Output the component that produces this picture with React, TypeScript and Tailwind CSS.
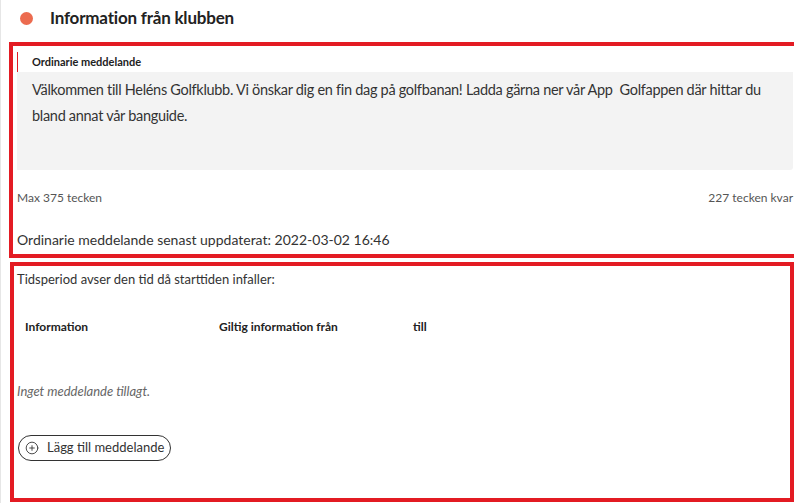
import { CirclePlus } from "lucide-react";

// ── Page ──────────────────────────────────────────────────────────────────────

export default function App() {
  return (
    <div className="h-[503px] w-[794px] overflow-hidden border-l border-[#e6e6e6] bg-white font-['Lato',sans-serif] text-[#333]">
      {/* Header */}
      <div className="flex h-[36px] items-center pl-[19px]">
        <span className="h-[13px] w-[13px] rounded-full bg-[#ec6b4f]" />
        <h1 className="ml-[17px] text-[17px] font-bold tracking-[-0.2px] text-[#222]">
          Information från klubben
        </h1>
      </div>

      {/* Ordinarie meddelande */}
      <section className="ml-[8px] mt-[6px] w-[800px] border-4 border-[#e31b23] pl-[4px] pr-[10px]">
        <div className="mt-[6px] flex h-[20px] items-center border-l border-[#e31b23] pl-[14px] text-[11px] font-bold text-[#222]">
          Ordinarie meddelande
        </div>
        <div className="h-[98px] w-[776px] rounded-br-[3px] bg-[#f3f3f3] px-[15px] pt-[5px] text-[14.5px] leading-[26px] tracking-[-0.3px]">
          Välkommen till Heléns Golfklubb. Vi önskar dig en fin dag på golfbanan! Ladda gärna ner vår App&nbsp; Golfappen där hittar du bland annat vår banguide.
        </div>
        <div className="mt-[19px] flex w-[776px] justify-between text-[12px] text-[#555]">
          <span>Max 375 tecken</span>
          <span>227 tecken kvar</span>
        </div>
        <p className="mt-[22px] pb-[4px] text-[14px]">
          Ordinarie meddelande senast uppdaterat: 2022-03-02 16:46
        </p>
      </section>

      {/* Tidsperiod */}
      <section className="ml-[9px] mt-[4px] h-[240px] w-[784px] border-4 border-[#e31b23] pl-[3px]">
        <p className="mt-[4px] text-[13px]">
          Tidsperiod avser den tid då starttiden infaller:
        </p>
        <div className="mt-[28px] grid grid-cols-[194px_194px_1fr] pl-[8px] text-[12px] font-bold text-[#222]">
          <span>Information</span>
          <span>Giltig information från</span>
          <span>till</span>
        </div>
        <p className="mt-[46px] text-[13px] italic text-[#666]">
          Inget meddelande tillagt.
        </p>
        <button
          type="button"
          className="ml-[1px] mt-[34px] flex h-[26px] w-[153px] items-center gap-[8px] rounded-full border border-[#333] pl-[6px] text-[13px] text-[#333]"
        >
          <CirclePlus size={14} strokeWidth={1.5} />
          Lägg till meddelande
        </button>
      </section>
    </div>
  );
}
